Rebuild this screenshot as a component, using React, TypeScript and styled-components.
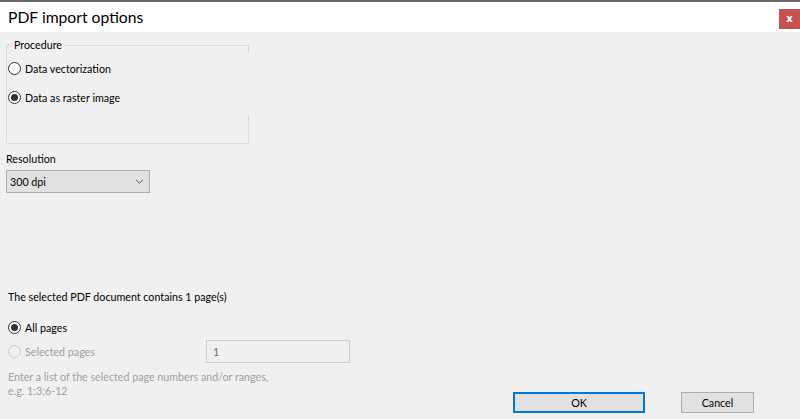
import React from "react";
import styled, { createGlobalStyle } from "styled-components";

const GlobalStyle = createGlobalStyle`
  html, body {
    margin: 0;
    padding: 0;
    background: #f0f0f0;
  }
  * {
    box-sizing: border-box;
  }
`;

const Window = styled.div`
  width: 800px;
  height: 419px;
  display: flex;
  flex-direction: column;
  background: #f0f0f0;
  font-family: Lato, "Noto Sans", sans-serif;
  font-size: 10.7px;
  color: #000;
  overflow: hidden;
`;

const TitleBar = styled.div`
  height: 32px;
  flex: none;
  display: flex;
  align-items: center;
  justify-content: space-between;
  background: #fff;
  border-top: 2px solid #6a6a6a;
  padding-left: 8px;
`;

const Title = styled.div`
  font-size: 15.7px;
  color: #000;
  margin-top: -1px;
`;

const CloseButton = styled.div`
  width: 21px;
  height: 20px;
  background: #c75050;
  color: #fff;
  font-family: "DejaVu Sans", sans-serif;
  font-weight: bold;
  font-size: 10px;
  display: flex;
  align-items: center;
  justify-content: center;
  margin-top: 4px;
  padding-bottom: 2px;
`;

const Body = styled.div`
  flex: 1;
  display: flex;
  flex-direction: column;
  padding: 13px 0 0 6px;
  position: relative;
`;

const GroupBox = styled.div`
  width: 243px;
  height: 99px;
  border: 1px solid #dcdcdc;
  display: flex;
  flex-direction: column;
`;

const Legend = styled.span`
  align-self: flex-start;
  margin: -9px 0 0 5px;
  padding: 0 2px;
  background: #f0f0f0;
  line-height: 16px;
`;

const RadioPanel = styled.div`
  display: flex;
  flex-direction: column;
  gap: 11px;
  margin: 0 -2px 0 1px;
  padding: 6px 0 9px;
  background: #f0f0f0;
`;

const RadioRow = styled.label<{ $disabled?: boolean }>`
  display: flex;
  align-items: center;
  gap: 4px;
  height: 18px;
  color: ${(p) => (p.$disabled ? "#a0a0a0" : "#000")};
`;

const Circle = styled.span<{ $checked?: boolean; $disabled?: boolean }>`
  width: 13px;
  height: 13px;
  border-radius: 50%;
  border: 1px solid ${(p) => (p.$disabled ? "#cccccc" : "#333")};
  background: ${(p) => (p.$disabled ? "#f0f0f0" : "#fff")};
  display: flex;
  align-items: center;
  justify-content: center;
  flex: none;
  &::after {
    content: "";
    width: 7px;
    height: 7px;
    border-radius: 50%;
    background: #333;
    display: ${(p) => (p.$checked ? "block" : "none")};
  }
`;

const Label = styled.div`
  margin-top: 7px;
  line-height: 16px;
`;

const Select = styled.div`
  width: 144px;
  height: 23px;
  margin-top: 3px;
  border: 1px solid #adadad;
  background: #e1e1e1;
  display: flex;
  align-items: center;
  justify-content: space-between;
  padding: 0 5px 0 3px;
`;

const Info = styled.div`
  margin: 96px 0 0 2px;
  line-height: 16px;
`;

const PagesBlock = styled.div`
  display: flex;
  flex-direction: column;
  margin: 13px 0 0 2px;
  gap: 6px;
`;

const PageRow = styled.div`
  display: flex;
  align-items: center;
  height: 18px;
`;

const PageRowWide = styled(PageRow)`
  width: 342px;
  justify-content: space-between;
`;

const TextInput = styled.div`
  width: 144px;
  height: 23px;
  border: 1px solid #cccccc;
  background: #f0f0f0;
  color: #6d6d6d;
  display: flex;
  align-items: center;
  padding-left: 6px;
`;

const Hint = styled.div`
  margin: 10px 0 0 2px;
  color: #a0a0a0;
  line-height: 14px;
`;

const Buttons = styled.div`
  position: absolute;
  right: 46px;
  bottom: 6px;
  display: flex;
  gap: 36px;
`;

const Button = styled.div<{ $default?: boolean; $width: number }>`
  width: ${(p) => p.$width}px;
  height: 21px;
  background: #e1e1e1;
  border: ${(p) => (p.$default ? "2px solid #0078d7" : "1px solid #adadad")};
  display: flex;
  align-items: center;
  justify-content: center;
`;

const Radio: React.FC<{ label: string; checked?: boolean; disabled?: boolean }> = ({
  label,
  checked,
  disabled,
}) => (
  <RadioRow $disabled={disabled}>
    <Circle $checked={checked} $disabled={disabled} />
    <span>{label}</span>
  </RadioRow>
);

const Chevron = () => (
  <svg width="9" height="5" viewBox="0 0 9 5">
    <path d="M1 0.8 L4.5 4.2 L8 0.8" fill="none" stroke="#555" strokeWidth="1" />
  </svg>
);

export default function App() {
  return (
    <>
      <GlobalStyle />
      <Window>
        <TitleBar>
          <Title>PDF import options</Title>
          <CloseButton>x</CloseButton>
        </TitleBar>
        <Body>
          <GroupBox>
            <Legend>Procedure</Legend>
            <RadioPanel>
              <Radio label="Data vectorization" />
              <Radio label="Data as raster image" checked />
            </RadioPanel>
          </GroupBox>
          <Label>Resolution</Label>
          <Select>
            <span>300 dpi</span>
            <Chevron />
          </Select>
          <Info>The selected PDF document contains 1 page(s)</Info>
          <PagesBlock>
            <PageRow>
              <Radio label="All pages" checked />
            </PageRow>
            <PageRowWide>
              <Radio label="Selected pages" disabled />
              <TextInput>1</TextInput>
            </PageRowWide>
          </PagesBlock>
          <Hint>
            Enter a list of the selected page numbers and/or ranges,
            <br />
            e.g. 1;3;6-12
          </Hint>
          <Buttons>
            <Button $default $width={132}>OK</Button>
            <Button $width={73}>Cancel</Button>
          </Buttons>
        </Body>
      </Window>
    </>
  );
}
